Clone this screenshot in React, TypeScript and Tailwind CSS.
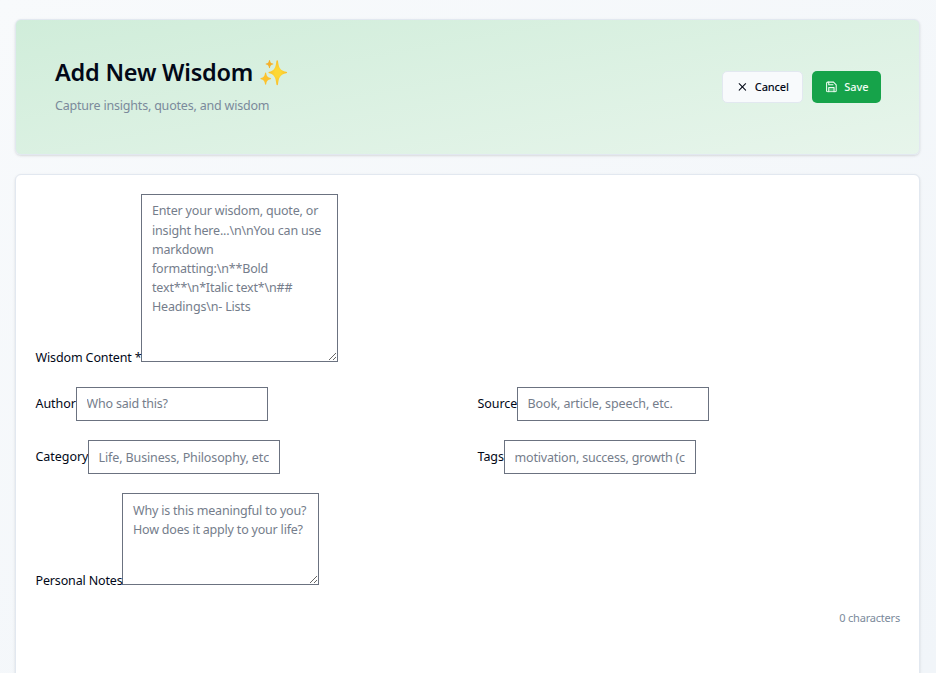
import React from "react";
import { X } from "lucide-react";

function Sparkles() {
  return (
    <svg viewBox="0 0 28 28" className="h-[28px] w-[28px] shrink-0" role="img" aria-label="sparkles">
      <defs>
        <radialGradient id="gold">
          <stop offset="0.3" stopColor="#fdd835" />
          <stop offset="1" stopColor="#f9bd2b" />
        </radialGradient>
      </defs>
      <path
        d="M17.2 1.2c.5 0 .7.4.8 1 .8 6.500 2.200 9.500 8.200 10.500.6.100.9.400.9.800s-.3.700-.9.800c-6 1.200-7.400 4.200-8.200 11-.1.600-.3 1-.8 1s-.7-.4-.8-1c-.8-6.800-2.100-9.800-7-11-.6-.1-.9-.4-.9-.8s.3-.7.900-.8c4.900-1 6.200-4 7-10.500.1-.6.300-1 .8-1z"
        fill="url(#gold)"
      />
      <path
        d="M5.600 13.500c.4 0 .5.300.6.700.4 3 1.500 4.300 4.300 4.800.4.100.6.300.6.600s-.2.500-.6.600c-2.800.5-3.900 1.800-4.300 4.800-.1.400-.2.700-.6.700s-.5-.3-.6-.7c-.4-3-1.400-4.300-4-4.800-.4-.1-.6-.3-.6-.6s.2-.5.600-.6c2.600-.5 3.600-1.800 4-4.800.1-.4.200-.7.600-.7z"
        fill="#fcc22d"
      />
      <path
        d="M9.500 1c.3 0 .4.200.5.500.3 2 1 2.700 2.900 3.100.3.100.5.200.5.500s-.2.400-.5.500c-1.900.4-2.600 1.100-2.900 3.100-.1.300-.2.500-.5.500s-.4-.2-.5-.5c-.3-2-1-2.700-2.900-3.100-.3-.1-.5-.2-.5-.5s.2-.4.500-.5c1.900-.4 2.600-1.100 2.900-3.100.1-.3.200-.5.500-.5z"
        fill="#f5b02a"
      />
    </svg>
  );
}

function SaveIcon() {
  return (
    <svg
      viewBox="0 0 24 24"
      className="h-[12.8px] w-[12.8px] -translate-y-[0.5px]"
      fill="none"
      stroke="currentColor"
      strokeWidth="2"
      strokeLinecap="round"
      strokeLinejoin="round"
    >
      <path d="M19 21H5a2 2 0 0 1-2-2V5a2 2 0 0 1 2-2h11l5 5v11a2 2 0 0 1-2 2z" />
      <polyline points="17 21 17 13 7 13 7 21" fill="currentColor" fillOpacity="0.25" />
      <polyline points="7 3 7 8 15 8" />
    </svg>
  );
}

type FieldProps = { label: string; labelClass: string; placeholder: string; inputClass: string };

function Field({ label, labelClass, placeholder, inputClass }: FieldProps) {
  return (
    <div className="flex h-[34px] items-center">
      <label className={`shrink-0 whitespace-nowrap pb-[2px] pl-[0.5px] leading-[19px] ${labelClass}`}>{label}</label>
      <input
        placeholder={placeholder}
        className={`h-[34px] w-[192px] border border-[#6b7280] bg-white px-[9.6px] placeholder:text-[#757d8b] outline-none ${inputClass}`}
      />
    </div>
  );
}

export default function App() {
  return (
    <div className="h-[673px] overflow-hidden bg-linear-to-br from-[#f8fafc] to-[#f1f5f9] px-[15px] pt-[19px] pr-[16px] font-['Noto_Sans',sans-serif] text-[12.5px] text-[#020817]">
      <header className="flex h-[136px] items-center justify-between rounded-[6px] border border-[#e2e8f0] bg-[linear-gradient(170deg,#d0edda,#e7f5eb)] pr-[38px] pl-[39px] shadow-sm">
        <div>
          <h1 className="flex h-[29px] items-center whitespace-nowrap text-[23.500px] font-semibold">
            <span className="w-[205px] tracking-[-0.22px]">Add New Wisdom</span>
            <Sparkles />
          </h1>
          <p className="mt-[8px] mb-[1px] leading-[19px] tracking-[-0.2px] text-[#7b8a9b]">Capture insights, quotes, and wisdom</p>
        </div>
        <div className="flex items-center gap-[9px] text-[11px] font-medium">
          <button className="flex h-[32px] w-[81px] items-center rounded-[5px] border border-[#e2e8f0] bg-[#f8fafc] pl-[13px]">
            <X size={12.8} strokeWidth={2} className="-translate-y-[0.5px]" />
            <span className="ml-[6px] tracking-[-0.15px]">Cancel</span>
          </button>
          <button className="flex h-[32px] w-[69px] items-center rounded-[5px] bg-[#16a34a] pl-[13px] text-[#f0fdf4]">
            <SaveIcon />
            <span className="ml-[6.5px] tracking-[-0.1px]">Save</span>
          </button>
        </div>
      </header>

      <main className="mt-[19px] h-[560px] rounded-[6px] border border-[#e2e8f0] bg-white px-[19px] pt-[19px] shadow-sm">
        <div className="flex h-[168px] items-end">
          <label className="w-[106px] shrink-0 translate-y-[5px] whitespace-nowrap pl-[0.5px] leading-[19px] tracking-[-0.13px]">Wisdom Content *</label>
          <textarea
            placeholder={"Enter your wisdom, quote, or insight here...\\n\\nYou can use markdown formatting:\\n**Bold text**\\n*Italic text*\\n## Headings\\n- Lists"}
            className="h-[168px] w-[197px] resize border border-[#6b7280] bg-white pr-[9.6px] pl-[10px] py-[6.4px] leading-[19.2px] tracking-[-0.18px] outline-none placeholder:text-[#757d8b]"
          />
        </div>
        <div className="mt-[25px] grid grid-cols-2 gap-x-[19px] gap-y-[19px]">
          <Field label="Author" labelClass="w-[41px] tracking-[-0.05px]" placeholder="Who said this?" inputClass="pb-[2px] tracking-[-0.22px]" />
          <Field label="Source" labelClass="w-[40px] tracking-[-0.05px]" placeholder="Book, article, speech, etc." inputClass="pb-[2px] tracking-[-0.12px]" />
          <Field label="Category" labelClass="w-[53px] tracking-[-0.05px]" placeholder="Life, Business, Philosophy, etc" inputClass="tracking-[-0.13px]" />
          <Field label="Tags" labelClass="w-[27px] tracking-[-0.05px]" placeholder="motivation, success, growth (comma separated)" inputClass="tracking-[-0.2px]" />
        </div>
        <div className="mt-[19px] flex h-[92px] items-end">
          <label className="w-[87px] shrink-0 translate-y-[5px] whitespace-nowrap pl-[0.5px] leading-[19px] tracking-[-0.15px]">Personal Notes</label>
          <textarea
            placeholder="Why is this meaningful to you? How does it apply to your life?"
            className="h-[92px] w-[197px] resize border border-[#6b7280] bg-white pr-[9px] pl-[10px] py-[7px] leading-[19.2px] tracking-[-0.2px] outline-none placeholder:text-[#757d8b]"
          />
        </div>
        <div className="mt-[25px] text-right text-[11px] leading-[16px] tracking-[-0.2px] text-[#7b8a9b]">0 characters</div>
      </main>
    </div>
  );
}
